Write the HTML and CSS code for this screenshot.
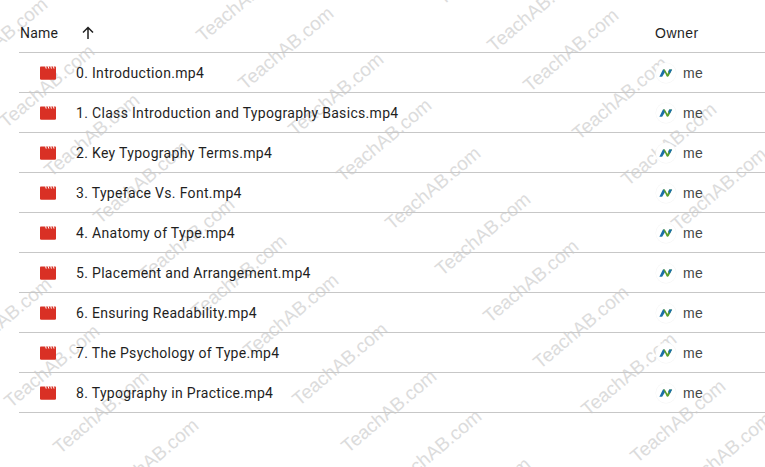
FILE: index.html
```html
<!DOCTYPE html>
<html>
	<head>
		<title>Typography class files</title>
		<link rel="stylesheet" href="styles.css">
	</head>
	<body>
		<svg width="0" height="0" class="defs">
			<symbol id="clip" viewBox="0 0 16 14">
				<path d="M0 1.2 Q0 0.4 0.8 0.4 H15.2 Q16 0.4 16 1.2 V12.5 Q16 13.8 14.7 13.8 H1.3 Q0 13.8 0 12.5 Z" fill="#d93025" />
				<path d="M5.6 0.2 L6.2 2.6 M8.2 0.2 L8.8 2.6 M10.8 0.2 L11.4 2.6 M13.4 0.2 L14 2.6" stroke="white" stroke-width="1" fill="none" />
			</symbol>
			<symbol id="logo" viewBox="0 0 20 20">
				<path d="M3.4 13.8 H6.2 L9.4 8.4 L8.4 6.6 Q7.6 6 6.8 6.8 Z" fill="#1a6fa8" />
				<path d="M7.4 6.4 Q8.4 6 9 6.8 L11.4 11 L13.2 6.4 H16 L12.8 13 Q11.6 14.4 10.6 13.2 Z" fill="#5a9e2f" />
				<path d="M13.2 6.4 H16.2 L13.8 11 L12.4 8.6 Z" fill="#1a6fa8" />
			</symbol>
		</svg>
		<div class="list">
			<div class="head">
				<div class="name-col">
					<span class="name-label">Name</span>
					<svg class="arrow" width="16" height="16" viewBox="0 0 16 16"><path d="M8 14 V3 M3 7.5 L8 2.5 L13 7.5" fill="none" stroke="#1f1f1f" stroke-width="1.5" /></svg>
				</div>
				<div class="owner-col">Owner</div>
			</div>
			<div class="row">
				<svg class="clip"><use href="#clip" /></svg>
				<span class="fname">0. Introduction.mp4</span>
				<div class="owner"><svg class="logo"><use href="#logo" /></svg><span class="me">me</span></div>
			</div>
			<div class="row">
				<svg class="clip"><use href="#clip" /></svg>
				<span class="fname">1. Class Introduction and Typography Basics.mp4</span>
				<div class="owner"><svg class="logo"><use href="#logo" /></svg><span class="me">me</span></div>
			</div>
			<div class="row">
				<svg class="clip"><use href="#clip" /></svg>
				<span class="fname">2. Key Typography Terms.mp4</span>
				<div class="owner"><svg class="logo"><use href="#logo" /></svg><span class="me">me</span></div>
			</div>
			<div class="row">
				<svg class="clip"><use href="#clip" /></svg>
				<span class="fname">3. Typeface Vs. Font.mp4</span>
				<div class="owner"><svg class="logo"><use href="#logo" /></svg><span class="me">me</span></div>
			</div>
			<div class="row">
				<svg class="clip"><use href="#clip" /></svg>
				<span class="fname">4. Anatomy of Type.mp4</span>
				<div class="owner"><svg class="logo"><use href="#logo" /></svg><span class="me">me</span></div>
			</div>
			<div class="row">
				<svg class="clip"><use href="#clip" /></svg>
				<span class="fname">5. Placement and Arrangement.mp4</span>
				<div class="owner"><svg class="logo"><use href="#logo" /></svg><span class="me">me</span></div>
			</div>
			<div class="row">
				<svg class="clip"><use href="#clip" /></svg>
				<span class="fname">6. Ensuring Readability.mp4</span>
				<div class="owner"><svg class="logo"><use href="#logo" /></svg><span class="me">me</span></div>
			</div>
			<div class="row">
				<svg class="clip"><use href="#clip" /></svg>
				<span class="fname">7. The Psychology of Type.mp4</span>
				<div class="owner"><svg class="logo"><use href="#logo" /></svg><span class="me">me</span></div>
			</div>
			<div class="row">
				<svg class="clip"><use href="#clip" /></svg>
				<span class="fname">8. Typography in Practice.mp4</span>
				<div class="owner"><svg class="logo"><use href="#logo" /></svg><span class="me">me</span></div>
			</div>
		</div>
		<!-- watermark, one text per stamp -->
		<svg class="marks" width="765" height="467">
			<text transform="translate(4 44) rotate(-40)">TeachAB.com</text>
			<text transform="translate(51 91) rotate(-40)">TeachAB.com</text>
			<text transform="translate(96 140) rotate(-40)">TeachAB.com</text>
			<text transform="translate(145 187) rotate(-40)">TeachAB.com</text>
			<text transform="translate(191 244) rotate(-40)">TeachAB.com</text>
			<text transform="translate(243 281) rotate(-40)">TeachAB.com</text>
			<text transform="translate(295 320) rotate(-40)">TeachAB.com</text>
			<text transform="translate(344 369) rotate(-40)">TeachAB.com</text>
			<text transform="translate(393 416) rotate(-40)">TeachAB.com</text>
			<text transform="translate(438 456) rotate(-40)">TeachAB.com</text>
			<text transform="translate(487 504) rotate(-40)">TeachAB.com</text>
			<text transform="translate(248 5) rotate(-40)">TeachAB.com</text>
			<text transform="translate(290 53) rotate(-40)">TeachAB.com</text>
			<text transform="translate(340 99) rotate(-40)">TeachAB.com</text>
			<text transform="translate(388 145) rotate(-40)">TeachAB.com</text>
			<text transform="translate(437 193) rotate(-40)">TeachAB.com</text>
			<text transform="translate(487 239) rotate(-40)">TeachAB.com</text>
			<text transform="translate(535 286) rotate(-40)">TeachAB.com</text>
			<text transform="translate(585 332) rotate(-40)">TeachAB.com</text>
			<text transform="translate(633 379) rotate(-40)">TeachAB.com</text>
			<text transform="translate(682 426) rotate(-40)">TeachAB.com</text>
			<text transform="translate(728 459) rotate(-40)">TeachAB.com</text>
			<text transform="translate(488 -32) rotate(-40)">TeachAB.com</text>
			<text transform="translate(539 15) rotate(-40)">TeachAB.com</text>
			<text transform="translate(575 55) rotate(-40)">TeachAB.com</text>
			<text transform="translate(624 103) rotate(-40)">TeachAB.com</text>
			<text transform="translate(673 149) rotate(-40)">TeachAB.com</text>
			<text transform="translate(723 194) rotate(-40)">TeachAB.com</text>
			<text transform="translate(8 324) rotate(-40)">TeachAB.com</text>
			<text transform="translate(56 371) rotate(-40)">TeachAB.com</text>
			<text transform="translate(105 417) rotate(-40)">TeachAB.com</text>
			<text transform="translate(155 465) rotate(-40)">TeachAB.com</text>
		</svg>
	</body>
</html>
```

FILE: styles.css
```css
html, body {
	height: 100%;
}
body {
	margin: 0;
	background: white;
	color: #1f1f1f;
	font: 400 14px Roboto, sans-serif;
	overflow: hidden;
	position: relative;
}
.defs {
	display: block;
	height: 0;
}
.list {
	margin-left: 19px;
	position: relative;
	z-index: 1;
}
.head {
	display: flex;
	align-items: center;
	height: 52px;
	border-bottom: 1px solid #c7c7c7;
}
.name-col {
	flex-grow: 1;
	display: flex;
	align-items: center;
	padding: 14px 0 0 1px;
}
.name-label {
	letter-spacing: 0.2px;
}
.arrow {
	margin-left: 22px;
}
.owner-col {
	width: 110px;
	padding-top: 14px;
	font-family: "Liberation Sans", sans-serif;
	letter-spacing: 0.5px;
}
.row {
	display: flex;
	align-items: center;
	height: 39px;
	padding-left: 21px;
	border-bottom: 1px solid #c7c7c7;
}
.clip {
	width: 16px;
	height: 14px;
	margin-right: 20px;
}
.fname {
	flex-grow: 1;
	letter-spacing: 0.32px;
}
.owner {
	width: 110px;
	display: flex;
	align-items: center;
}
.logo {
	width: 20px;
	height: 20px;
	margin-left: 1px;
	background: white;
	border-radius: 50%;
	box-shadow: 0 0 0 0.5px #f6f6f6;
}
.me {
	margin-left: 7px;
	color: #444746;
	font-family: "Liberation Sans", sans-serif;
	letter-spacing: 0.3px;
}
.marks {
	position: absolute;
	left: 0;
	top: 0;
}
.marks text {
	font: 400 19px "Liberation Sans", sans-serif;
	text-anchor: middle;
	fill: #dcdcdc;
}
```
